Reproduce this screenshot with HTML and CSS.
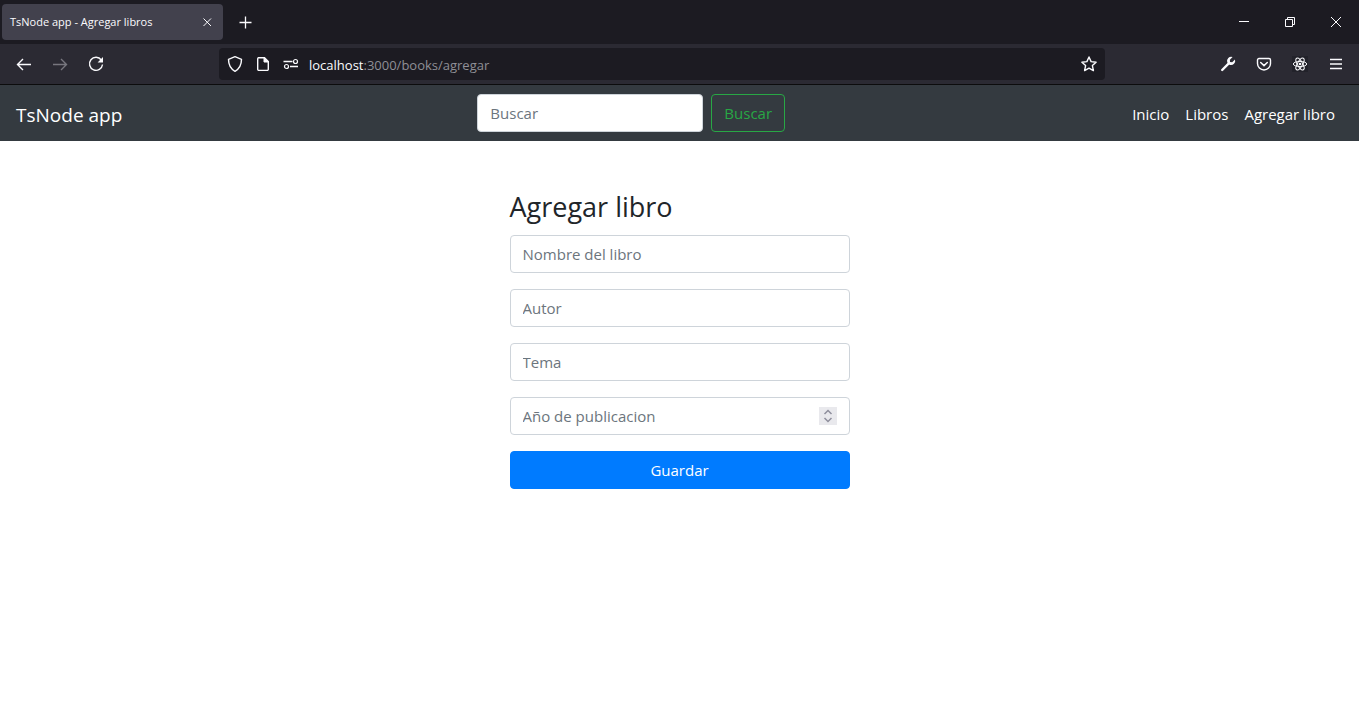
FILE: index.html
```html
<!DOCTYPE html>
<html lang="es">
<head>
<meta charset="utf-8">
<title>TsNode app - Agregar libros</title>
<link rel="stylesheet" href="styles.css">
</head>
<body>
<div class="tab-strip">
  <div class="tab">
    <span class="tab-title">TsNode app - Agregar libros</span>
    <button class="tab-close" type="button" aria-label="Cerrar pestaña"><svg class="icon" viewBox="0 0 16 16"><path d="M4.500 4.500l7.500 7.500M12 4.500l-7.500 7.500"/></svg></button>
  </div>
  <button class="tool-button" type="button" aria-label="Nueva pestaña"><svg class="icon" viewBox="0 0 16 16"><path d="M8.500 2.500v12M2.500 8.500h12" stroke-width="1.300"/></svg></button>
  <div class="window-buttons">
    <button class="window-button" type="button" aria-label="Minimizar"><svg class="icon" viewBox="0 0 16 16"><path d="M3 7.500h10"/></svg></button>
    <button class="window-button" type="button" aria-label="Restaurar"><svg class="icon" viewBox="0 0 16 16"><path d="M3.500 5.500h7v7h-7zM5.500 5.500v-2h7v7h-2"/></svg></button>
    <button class="window-button" type="button" aria-label="Cerrar"><svg class="icon" viewBox="0 0 16 16"><path d="M3 3l10 10M13 3L3 13"/></svg></button>
  </div>
</div>
<div class="toolbar">
  <button class="tool-button" type="button" aria-label="Atrás"><svg class="icon" viewBox="0 0 16 16"><path d="M1.500 8.500h13.500M7 3L1.500 8.500 7 14" stroke-width="1.400"/></svg></button>
  <button class="tool-button disabled" type="button" aria-label="Adelante" disabled><svg class="icon" viewBox="0 0 16 16"><path d="M1 8.500h13.500M9 3l5.500 5.500L9 14" stroke-width="1.400"/></svg></button>
  <button class="tool-button" type="button" aria-label="Recargar"><svg class="icon" viewBox="0 0 16 16"><path d="M13.300 4A6.500 6.500 0 1 0 14.500 8.500" stroke-width="1.400"/><path d="M15 1v5.400h-5.400z" fill="currentColor" stroke="none"/></svg></button>
  <div class="url-bar">
    <button class="url-button" type="button" aria-label="Protección"><svg class="icon" viewBox="0 0 16 16"><path d="M8 .7L14.500 3.300c0 5-1.500 9.200-6.500 12-5-2.800-6.500-7-6.500-12z" stroke-width="1.400" stroke-linejoin="round"/></svg></button>
    <button class="url-button" type="button" aria-label="Información del sitio"><svg class="icon" viewBox="0 0 16 16"><path d="M3.500 1.700h6L13.300 5.500v7.700a1.200 1.200 0 0 1-1.200 1.200H3.900a1.200 1.200 0 0 1-1.200-1.200V2.900a1.200 1.200 0 0 1 .8-1.200z" stroke-width="1.400"/><path d="M9 1.500V6h4.500z" fill="currentColor"/></svg></button>
    <button class="url-button" type="button" aria-label="Permisos"><svg class="icon" viewBox="0 0 16 16"><path d="M.5 5.500h9M7 10.500h8" stroke-width="1.400"/><circle cx="12.500" cy="5.500" r="2" stroke-width="1.200"/><circle cx="3.500" cy="10.500" r="2" stroke-width="1.200"/></svg></button>
    <div class="address"><span class="host">localhost</span>:3000/books/agregar</div>
    <button class="url-button" type="button" aria-label="Añadir a marcadores"><svg class="icon" viewBox="0 0 16 16"><path d="M8 1l2.100 4.600 5 .6-3.700 3.400 1 5L8 12.200l-4.400 2.400 1-5L.9 6.200l5-.6z" stroke-width="1.400" stroke-linejoin="round"/></svg></button>
  </div>
  <button class="tool-button" type="button" aria-label="Herramientas"><svg class="icon" viewBox="0 0 16 16"><path d="M2.200 14L9 7.200" stroke-width="2.400" stroke-linecap="round"/><path d="M12.600 1.100A4.200 4.200 0 0 0 7.200 6.300L9.800 8.900A4.200 4.200 0 0 0 15 3.600L12.200 6.200 10 5.900 9.900 3.700z" fill="currentColor" stroke="none"/></svg></button>
  <button class="tool-button" type="button" aria-label="Guardar en Pocket"><svg class="icon" viewBox="0 0 16 16"><path d="M3 2.500h10a1.500 1.500 0 0 1 1.500 1.500v3.500a6.500 6.500 0 0 1-13 0V4A1.500 1.500 0 0 1 3 2.500z" stroke-width="1.400"/><path d="M4.700 6.500L8 9.600l3.300-3.100" stroke-width="1.500" stroke-linecap="round"/></svg></button>
  <button class="tool-button" type="button" aria-label="React"><svg class="icon atom" viewBox="0 0 16 16"><ellipse cx="8" cy="8" rx="6.700" ry="2.600"/><ellipse cx="8" cy="8" rx="6.700" ry="2.600" transform="rotate(60 8 8)"/><ellipse cx="8" cy="8" rx="6.700" ry="2.600" transform="rotate(120 8 8)"/><circle cx="8" cy="8" r="1.300" fill="currentColor" stroke="none"/></svg></button>
  <button class="tool-button" type="button" aria-label="Menú"><svg class="icon" viewBox="0 0 16 16"><path d="M2 3.500h12M2 8h12M2 12.500h12" stroke-width="1.400"/></svg></button>
</div>
<nav class="navbar">
  <a class="brand" href="#">TsNode app</a>
  <form class="search">
    <input class="field search-field" type="search" placeholder="Buscar" aria-label="Buscar">
    <button class="button button-outline" type="button">Buscar</button>
  </form>
  <div class="links">
    <a class="link" href="#">Inicio</a>
    <a class="link" href="#">Libros</a>
    <a class="link" href="#">Agregar libro</a>
  </div>
</nav>
<main class="content">
  <form class="book-form">
    <h1 class="title">Agregar libro</h1>
    <div class="fields">
      <input class="field" type="text" placeholder="Nombre del libro" aria-label="Nombre del libro">
      <input class="field" type="text" placeholder="Autor" aria-label="Autor">
      <input class="field" type="text" placeholder="Tema" aria-label="Tema">
      <div class="number">
        <input class="field" type="number" placeholder="Año de publicacion" aria-label="Año de publicacion">
        <svg class="spinner" viewBox="0 0 18 18"><path d="M5.500 7L9 3.500 12.500 7M5.500 11L9 14.500 12.500 11"/></svg>
      </div>
      <button class="button button-primary" type="button">Guardar</button>
    </div>
  </form>
</main>
</body>
</html>
```
FILE: styles.css
```css
* { box-sizing: border-box; }

body {
  margin: 0;
  background: #fff;
  color: #212529;
  font-family: "Open Sans", "Noto Sans", sans-serif;
  font-size: 15px;
  line-height: 24px;
}

button, input { font: inherit; }
button { cursor: pointer; }

.icon {
  display: block;
  flex: none;
  width: 16px;
  height: 16px;
  fill: none;
  stroke: currentColor;
  stroke-width: 1;
}

.atom {
  background: #22222a;
  stroke-width: 1;
}

/* Browser tabs */
.tab-strip {
  display: flex;
  align-items: center;
  height: 44px;
  padding-left: 2px;
  background: #1c1b22;
  color: #fbfbfe;
}

.tab {
  display: flex;
  align-items: center;
  justify-content: space-between;
  width: 221px;
  height: 36px;
  margin-right: 4px;
  padding: 0 4px 0 8px;
  border-radius: 4px;
  background: #42414d;
}

.tab-title {
  font-size: 11px;
  white-space: nowrap;
}

.tab-close, .tool-button, .url-button, .window-button {
  display: flex;
  flex: none;
  align-items: center;
  justify-content: center;
  padding: 0;
  border: 0;
  background: transparent;
  color: #fbfbfe;
}

.tab-close { width: 24px; height: 24px; }
.tool-button { width: 36px; height: 32px; }
.url-button { width: 28px; height: 28px; }
.window-button { width: 46px; height: 44px; }
.tool-button.disabled { color: #77767e; }

.window-buttons {
  display: flex;
  margin-left: auto;
}

/* Browser toolbar */
.toolbar {
  display: flex;
  align-items: center;
  height: 41px;
  padding: 0 5px 0 6px;
  border-bottom: 1px solid #0c0c0d;
  background: #2b2a33;
}

.url-bar {
  display: flex;
  flex: 1;
  align-items: center;
  height: 32px;
  margin: 0 105px;
  padding: 0 2px;
  border-radius: 4px;
  background: #1c1b22;
}

.address {
  flex: 1;
  padding: 2px 0 0 4px;
  color: #8f8f96;
  font-size: 13px;
}

.host { color: #fbfbfe; }

/* Site navigation */
.navbar {
  display: flex;
  align-items: center;
  justify-content: space-between;
  min-height: 56px;
  padding: 8px 16px;
  background: #343a40;
}

.brand {
  margin-right: 16px;
  padding-top: 4px;
  color: #fff;
  font-size: 19px;
  line-height: 30px;
  text-decoration: none;
}

.search {
  display: flex;
  gap: 8px;
}

.links { display: flex; }

.link {
  padding: 8px 8px 6px;
  color: #fff;
  text-decoration: none;
}

/* Form controls */
.field {
  display: block;
  width: 100%;
  height: 38px;
  padding: 6px 12px;
  border: 1px solid #ced4da;
  border-radius: 4px;
  background: #fff;
  color: #495057;
  appearance: none;
}

.field::placeholder {
  color: #6c757d;
  opacity: 1;
}

.search-field { width: 226px; }

.button {
  height: 38px;
  padding: 6px 12px;
  border: 1px solid transparent;
  border-radius: 4px;
}

.button-outline {
  border-color: #28a745;
  background: transparent;
  color: #28a745;
}

.button-primary {
  border-color: #007bff;
  background: #007bff;
  color: #fff;
}

/* Book form */
.content { padding: 52px 16px; }

.book-form {
  max-width: 340px;
  margin: 0 auto;
}

.title {
  margin: 0 0 14px;
  font-size: 27px;
  font-weight: 400;
  line-height: 28px;
}

.fields {
  display: grid;
  gap: 16px;
}

.number { position: relative; }

.number .field { appearance: textfield; }

.number .field::-webkit-inner-spin-button { display: none; }

.spinner {
  position: absolute;
  top: 10px;
  right: 13px;
  width: 18px;
  height: 18px;
  background: #e9e9ed;
  fill: none;
  stroke: #8f8f9d;
  stroke-width: 1.5;
  pointer-events: none;
}
```
